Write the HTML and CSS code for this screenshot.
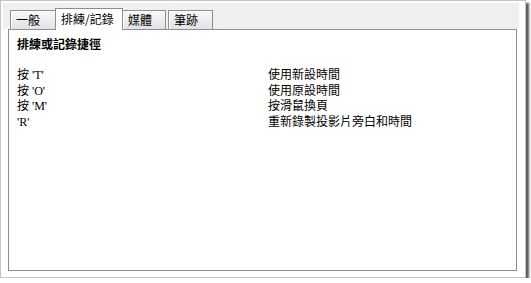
FILE: index.html
```html
<!DOCTYPE html>
<html lang="zh-Hant">
<head>
    <meta charset="UTF-8">
    <title>排練或記錄捷徑</title>
    <link rel="stylesheet" href="styles.css">
</head>
<body>
    <div class="frame">
        <div class="dialog">
            <div class="tabstrip">
                <div class="tab t1">一般</div>
                <div class="tab active">排練/記錄</div>
                <div class="tab t3">媒體</div>
                <div class="tab t4">筆跡</div>
            </div>
            <div class="panel">
                <h2>排練或記錄捷徑</h2>
                <div class="keys">
                    <span>按 'T'</span><span>使用新設時間</span>
                    <span>按 'O'</span><span>使用原設時間</span>
                    <span>按 'M'</span><span>按滑鼠換頁</span>
                    <span>'R'</span><span>重新錄製投影片旁白和時間</span>
                </div>
            </div>
        </div>
    </div>
</body>
</html>
```

FILE: styles.css
```css
body {
    margin: 0;
    background: #fff;
    font-family: "Liberation Serif", "Noto Sans CJK TC", serif;
    font-size: 12px;
    color: #000;
}
.frame {
    width: 526px;
    height: 278px;
    border: 1px solid #c4c4c4;
    padding: 2px 0 0 2px;
    box-sizing: border-box;
    box-shadow: 3px 3px 2px rgba(0, 0, 0, 0.65);
    background: #fff;
}
.dialog {
    width: 516px;
}
.tabstrip {
    display: flex;
    align-items: flex-end;
    height: 26px;
    padding-left: 7px;
    background: #efefef;
    font-family: "Noto Sans CJK TC", sans-serif;
}
.tab {
    box-sizing: border-box;
    height: 19px;
    padding: 1px 0 0 5px;
    line-height: 16px;
    border: 1px solid #8c8c9c;
    border-bottom: none;
    box-shadow: inset 1px 1px 0 #fff;
    background: linear-gradient(#f8f8f8, #e2e2e2);
}
.t1 { width: 46px; }
.t3 { width: 44px; margin-left: -1px; }
.t4 { width: 45px; margin-left: 2px; }
.tab.active {
    width: 68px;
    height: 22px;
    margin-bottom: -1px;
    margin-left: -1px;
    padding-top: 2px;
    background: #fff;
    position: relative;
    z-index: 1;
}
.panel {
    box-sizing: border-box;
    width: 509px;
    height: 242px;
    margin: 0 0 0 5px;
    border: 1px solid #8c8c9c;
    padding: 6px 8px;
    background: #fff;
}
h2 {
    margin: 0 0 17px;
    font-family: "Noto Sans CJK TC", sans-serif;
    font-size: 12px;
    line-height: 15px;
    font-weight: bold;
}
.keys {
    display: grid;
    grid-template-columns: 251px 1fr;
    line-height: 15.6px;
}
```
